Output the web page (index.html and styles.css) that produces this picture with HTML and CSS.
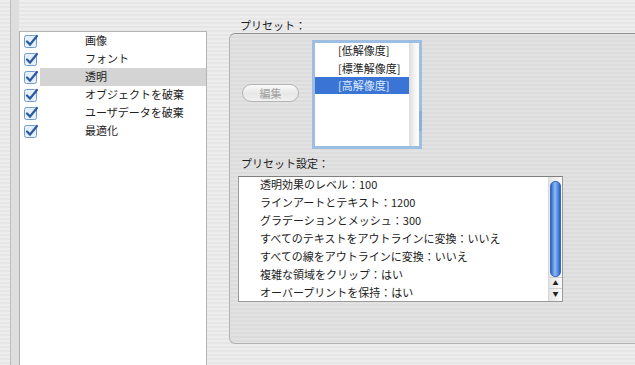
FILE: index.html
```html
<!DOCTYPE html>
<html lang="ja">
<head>
    <meta charset="UTF-8">
    <title>Flattener Preset</title>
    <link rel="stylesheet" href="styles.css">
</head>
<body>
    <div class="rail"></div>
    <div class="gutter"></div>

    <div class="layers">
        <div class="layer-row"><span class="check"><svg width="14" height="14" viewBox="0 0 14 14"><rect x="0.5" y="1.5" width="12" height="12" rx="2" fill="#e6effa" stroke="#6f9bd0"/><path d="M3 7.5 L6 10.5 L13 2" stroke="#2a5aa6" stroke-width="2.2" fill="none" stroke-linecap="round"/></svg></span><span class="layer-name">画像</span></div>
        <div class="layer-row"><span class="check"><svg width="14" height="14" viewBox="0 0 14 14"><rect x="0.5" y="1.5" width="12" height="12" rx="2" fill="#e6effa" stroke="#6f9bd0"/><path d="M3 7.5 L6 10.5 L13 2" stroke="#2a5aa6" stroke-width="2.2" fill="none" stroke-linecap="round"/></svg></span><span class="layer-name">フォント</span></div>
        <div class="layer-row selected"><span class="check"><svg width="14" height="14" viewBox="0 0 14 14"><rect x="0.5" y="1.5" width="12" height="12" rx="2" fill="#e6effa" stroke="#6f9bd0"/><path d="M3 7.5 L6 10.5 L13 2" stroke="#2a5aa6" stroke-width="2.2" fill="none" stroke-linecap="round"/></svg></span><span class="layer-name">透明</span></div>
        <div class="layer-row"><span class="check"><svg width="14" height="14" viewBox="0 0 14 14"><rect x="0.5" y="1.5" width="12" height="12" rx="2" fill="#e6effa" stroke="#6f9bd0"/><path d="M3 7.5 L6 10.5 L13 2" stroke="#2a5aa6" stroke-width="2.2" fill="none" stroke-linecap="round"/></svg></span><span class="layer-name">オブジェクトを破棄</span></div>
        <div class="layer-row"><span class="check"><svg width="14" height="14" viewBox="0 0 14 14"><rect x="0.5" y="1.5" width="12" height="12" rx="2" fill="#e6effa" stroke="#6f9bd0"/><path d="M3 7.5 L6 10.5 L13 2" stroke="#2a5aa6" stroke-width="2.2" fill="none" stroke-linecap="round"/></svg></span><span class="layer-name">ユーザデータを破棄</span></div>
        <div class="layer-row"><span class="check"><svg width="14" height="14" viewBox="0 0 14 14"><rect x="0.5" y="1.5" width="12" height="12" rx="2" fill="#e6effa" stroke="#6f9bd0"/><path d="M3 7.5 L6 10.5 L13 2" stroke="#2a5aa6" stroke-width="2.2" fill="none" stroke-linecap="round"/></svg></span><span class="layer-name">最適化</span></div>
    </div>

    <div class="main">
        <div class="label preset-label">プリセット：</div>
        <div class="group">
            <div class="preset-row">
                <button class="edit-button" disabled>編集</button>
                <div class="preset-list">
                    <div class="preset-items">
                        <div class="preset-item">[低解像度]</div>
                        <div class="preset-item">[標準解像度]</div>
                        <div class="preset-item selected">[高解像度]</div>
                    </div>
                    <div class="preset-scroll"></div>
                    <span class="ring-thumb"></span>
                </div>
            </div>

            <div class="label settings-label">プリセット設定：</div>
            <div class="settings">
                <div class="settings-rows">
                    <div class="setting">透明効果のレベル：100</div>
                    <div class="setting">ラインアートとテキスト：1200</div>
                    <div class="setting">グラデーションとメッシュ：300</div>
                    <div class="setting">すべてのテキストをアウトラインに変換：いいえ</div>
                    <div class="setting">すべての線をアウトラインに変換：いいえ</div>
                    <div class="setting">複雑な領域をクリップ：はい</div>
                    <div class="setting">オーバープリントを保持：はい</div>
                </div>
                <div class="scrollbar">
                    <div class="thumb"></div>
                    <div class="arrow">&#9650;</div>
                    <div class="arrow">&#9660;</div>
                </div>
            </div>
        </div>
    </div>
</body>
</html>
```

FILE: styles.css
```css
body {
    margin: 0;
    width: 635px;
    height: 365px;
    overflow: hidden;
    display: flex;
    font-family: "Noto Sans CJK JP", "DejaVu Sans", sans-serif;
    font-size: 11px;
    color: #222;
    background: repeating-linear-gradient(#ededed 0 2px, #e6e6e6 2px 4px);
}
.rail {
    width: 10px;
    flex: none;
    border-right: 1px solid #bdbdbd;
}
.gutter {
    width: 8px;
    flex: none;
    background: #dedede;
}
.layers {
    width: 186px;
    height: 340px;
    flex: none;
    margin-top: 31px;
    background: #fff;
    border: 1px solid #b4b4b4;
    border-bottom: none;
}
.layer-row {
    display: flex;
    align-items: center;
    height: 18px;
}
.check {
    width: 16px;
    height: 18px;
    flex: none;
    display: flex;
    align-items: center;
    padding-left: 4px;
    background: #fff;
}
.check svg {
    display: block;
}
.layer-name {
    flex: 1;
    height: 18px;
    line-height: 17px;
    padding-left: 45px;
}
.layer-row.selected .layer-name {
    background: #d4d4d4;
}
.main {
    flex: 1;
    display: flex;
    flex-direction: column;
    padding-left: 22px;
}
.label {
    line-height: 14px;
    padding-left: 11px;
}
.preset-label {
    margin-top: 18px;
    height: 15px;
}
.group {
    height: 309px;
    margin-right: -12px;
    border: 1px solid #b2b2b2;
    border-top-color: #929292;
    border-radius: 6px;
    background: repeating-linear-gradient(#e2e2e2 0 2px, #dcdcdc 2px 4px);
}
.preset-row {
    display: flex;
    align-items: center;
    margin-top: 6px;
    padding-left: 12px;
}
.edit-button {
    width: 57px;
    height: 18px;
    padding: 0;
    margin-top: -3px;
    border: 1px solid #b4b4b4;
    border-radius: 9px;
    background: linear-gradient(#fbfbfb, #e6e6e6 55%, #f2f2f2);
    font-family: inherit;
    font-size: 11px;
    color: #a0a0a0;
}
.preset-list {
    position: relative;
    display: flex;
    width: 104px;
    height: 103px;
    margin-left: 13px;
    border: 3px solid #9dbde2;
    background: #fff;
}
.preset-items {
    flex: 1;
    margin-top: -2px;
}
.preset-item {
    height: 18px;
    line-height: 18px;
    padding-left: 23px;
    color: #222;
}
.preset-item.selected {
    height: 17px;
    line-height: 16px;
    background: #3a75d6;
    color: #dfe9ff;
}
.preset-scroll {
    width: 10px;
    background: linear-gradient(90deg, #dcdcdc, #f6f6f6 60%, #fff);
}
.ring-thumb {
    position: absolute;
    right: -3px;
    top: 68px;
    width: 3px;
    height: 20px;
    background: #88b0dc;
}
.settings-label {
    margin-top: 7px;
    height: 20px;
}
.settings {
    display: flex;
    width: 323px;
    height: 124px;
    margin-left: 8px;
    background: #fff;
    border: 1px solid #9a9a9a;
    border-top-color: #7e7e7e;
    overflow: hidden;
}
.settings-rows {
    flex: 1;
    margin-top: -2px;
}
.setting {
    height: 18px;
    line-height: 18px;
    padding-left: 21px;
    white-space: nowrap;
}
.scrollbar {
    width: 13px;
    flex: none;
    display: flex;
    flex-direction: column;
    align-items: center;
    border-left: 1px solid #d8d8d8;
    background: linear-gradient(90deg, #e4e4e4, #fafafa);
}
.thumb {
    width: 9px;
    height: 94px;
    margin-top: 4px;
    border: 1px solid #3b68b8;
    border-radius: 5px;
    background: linear-gradient(90deg, #2c64c8, #8fbcf3 45%, #5a94e4 70%, #2b5fc0);
}
.arrow {
    width: 13px;
    height: 10px;
    font-size: 6px;
    line-height: 10px;
    text-align: center;
    color: #222;
    border-top: 1px solid #d0d0d0;
}
.arrow:first-of-type {
    margin-top: 2px;
}
```
